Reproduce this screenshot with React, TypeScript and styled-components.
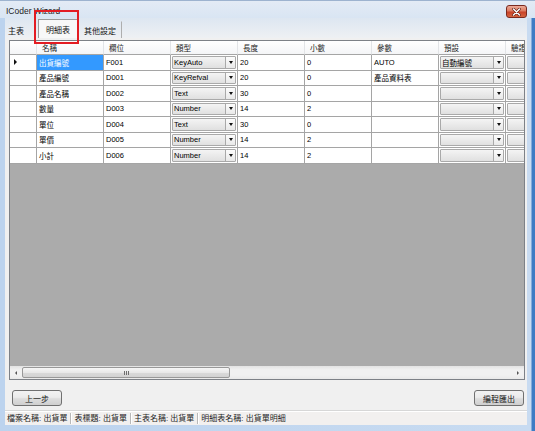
import React from 'react';
import styled, { createGlobalStyle } from 'styled-components';

const FONT = `"Liberation Sans", "Noto Sans CJK TC", sans-serif`;

const GlobalStyle = createGlobalStyle`
  * { box-sizing: border-box; }
  html, body { margin: 0; padding: 0; }
  body {
    width: 535px; height: 431px; overflow: hidden;
    background: #c3d8f1;
    font-family: ${FONT};
  }
`;

const Window = styled.div`
  position: relative;
  width: 535px;
  height: 431px;
  overflow: hidden;
  display: flex;
  flex-direction: column;
  background: linear-gradient(to right, #bcd3ee 0, #c8dbf1 527px, #c8dbf1 531px, #3f7cc4 532px, #3f7cc4 535px);
`;

const TitleBar = styled.div`
  height: 18px;
  flex: none;
  display: flex;
  align-items: flex-start;
  justify-content: space-between;
  padding: 0 8px 0 6px;
  background: linear-gradient(#e3ebf5, #d9e5f3);
  border-top: 1px solid #9db3cf;
`;

const Title = styled.span`
  font: 8.5px "Liberation Sans", sans-serif;
  color: #1e1e1e;
  margin-top: 5px;
  line-height: 10px;
`;

const CloseBtn = styled.div`
  width: 21px;
  height: 13px;
  margin-top: 4px;
  border: 1px solid #7a2a1f;
  border-radius: 3px;
  background: linear-gradient(#ecab98 0%, #dc7a60 45%, #c8432a 55%, #d5643f 100%);
  display: flex;
  align-items: center;
  justify-content: center;
`;

const Frame = styled.div`
  flex: 1;
  min-height: 0;
  display: flex;
  padding: 0 8px 0 5px;
`;

const Client = styled.div`
  flex: 1;
  min-width: 0;
  overflow: hidden;
  display: flex;
  flex-direction: column;
  background: #f0f0f0;
`;

const BottomFrame = styled.div`
  height: 6px;
  flex: none;
`;

const TabStrip = styled.div`
  height: 20px;
  flex: none;
  display: flex;
  align-items: flex-end;
  background: linear-gradient(#dde6f1, #eef0f3);
`;

const Tab = styled.div<{ $active?: boolean }>`
  height: ${p => (p.$active ? 19 : 17)}px;
  display: flex;
  align-items: center;
  padding: 0 ${p => (p.$active ? 7 : 5)}px;
  font-size: 8px;
  color: #111;
  white-space: nowrap;
  border: 1px solid ${p => (p.$active ? '#9a9a9a' : 'transparent')};
  border-bottom: none;
  border-right-color: ${p => (p.$active ? '#9a9a9a' : '#aeaeae')};
  background: ${p => (p.$active ? '#f8f8f8' : 'transparent')};
  &:first-child {
    margin-left: -2px;
    padding: 0 13px 0 4px;
    border-right-color: transparent;
  }
`;

const TabPage = styled.div`
  flex: none;
  padding: 2px 2px 0 4px;
`;

const GridBox = styled.div`
  width: 516px;
  height: 340px;
  border: 1px solid #7d8187;
  display: flex;
  flex-direction: column;
  background: #ababab;
  overflow: hidden;
`;

const Viewport = styled.div`
  flex: 1;
  min-height: 0;
  overflow: hidden;
`;

const GridRow = styled.div<{ $h: number }>`
  display: grid;
  grid-template-columns: 27px repeat(8, 67px);
  width: 563px;
  height: ${p => p.$h}px;
`;

const HeadCell = styled.div`
  display: flex;
  align-items: center;
  padding-left: 5px;
  font-size: 7.5px;
  color: #1a1a1a;
  white-space: nowrap;
  overflow: hidden;
  background: linear-gradient(#ffffff, #f4f5f7);
  border-right: 1px solid #e2e4e7;
  border-bottom: 1px solid #a5a5a5;
`;

const RowHead = styled.div<{ $current?: boolean }>`
  display: flex;
  align-items: center;
  padding-left: 4px;
  background: #ffffff;
  border-right: 1px solid #a5a5a5;
  border-bottom: 1px solid #a5a5a5;
  &::after {
    content: '';
    display: ${p => (p.$current ? 'block' : 'none')};
    border-top: 3px solid transparent;
    border-bottom: 3px solid transparent;
    border-left: 3px solid #111;
  }
`;

const Cell = styled.div<{ $sel?: boolean }>`
  display: flex;
  align-items: center;
  padding-left: 2px;
  font-size: 7.5px;
  white-space: nowrap;
  overflow: hidden;
  color: ${p => (p.$sel ? '#ffffff' : '#000000')};
  background: ${p => (p.$sel ? '#3399ff' : '#ffffff')};
  border-right: 1px solid #a5a5a5;
  border-bottom: 1px solid #a5a5a5;
`;

const ComboCell = styled(Cell)`
  padding: 1px;
  align-items: stretch;
`;

const Combo = styled.div`
  flex: 1;
  display: flex;
  border: 1px solid #a9a9a9;
  border-radius: 1px;
  background: linear-gradient(#f4f4f4, #e0e0e0);
`;

const ComboText = styled.span`
  flex: 1;
  display: flex;
  align-items: center;
  padding-left: 1px;
  font-size: 7.5px;
  overflow: hidden;
`;

const ComboArrow = styled.span`
  width: 10px;
  flex: none;
  display: flex;
  align-items: center;
  justify-content: center;
  border-left: 1px solid #a9a9a9;
  background: linear-gradient(#fcfcfc, #e9e9e9);
  &::after {
    content: '';
    border-left: 2.5px solid transparent;
    border-right: 2.5px solid transparent;
    border-top: 3px solid #111;
  }
`;

const HScroll = styled.div`
  height: 13px;
  flex: none;
  display: flex;
  align-items: center;
  background: linear-gradient(#e3e3e3, #f1f1f1 30%, #f1f1f1 70%, #e9e9e9);
`;

const ScrollArrow = styled.div<{ $dir: 'left' | 'right' }>`
  width: 12px;
  height: 100%;
  flex: none;
  display: flex;
  align-items: center;
  justify-content: center;
  &::after {
    content: '';
    border-top: 2.5px solid transparent;
    border-bottom: 2.5px solid transparent;
    ${p => (p.$dir === 'left' ? 'border-right: 2.5px solid #555;' : 'border-left: 2.5px solid #555;')}
  }
`;

const Thumb = styled.div`
  width: 208px;
  height: 11px;
  flex: none;
  display: flex;
  align-items: center;
  justify-content: center;
  border: 1px solid #989898;
  border-radius: 2px;
  background: linear-gradient(#f6f6f6, #e8e8e8 50%, #dadada 50%, #d2d2d2);
`;

const Grip = styled.span`
  width: 5px;
  height: 4px;
  background: repeating-linear-gradient(to right, #6e6e6e 0, #6e6e6e 1px, transparent 1px, transparent 2px);
`;

const ScrollSpace = styled.div`
  flex: 1;
`;

const ButtonRow = styled.div`
  height: 30px;
  flex: none;
  display: flex;
  align-items: flex-start;
  justify-content: space-between;
  padding: 10px 3px 0 7px;
`;

const Button = styled.button`
  width: 50px;
  height: 16px;
  padding: 0;
  border: 1px solid #707070;
  border-radius: 3px;
  background: linear-gradient(#f2f2f2 0%, #ebebeb 45%, #dddddd 55%, #cfcfcf 100%);
  font: 8px ${FONT};
  color: #111;
  display: flex;
  align-items: center;
  justify-content: center;
`;

const StatusBar = styled.div`
  height: 15px;
  flex: none;
  display: flex;
  align-items: center;
  padding-left: 2px;
  background: #f2f0ef;
  border-top: 1px solid #d7d7d7;
  box-shadow: inset 0 1px 0 #ffffff;
`;

const StatusItem = styled.span`
  font-size: 8px;
  color: #1e1e1e;
  padding: 0 3px 0 0;
  margin-right: 3px;
  line-height: 11px;
  white-space: nowrap;
  border-right: 1px solid #b8b8b8;
  box-shadow: 1px 0 0 #ffffff;
  &:last-child {
    border-right: none;
    box-shadow: none;
  }
`;

const Annotation = styled.div`
  position: absolute;
  left: 34px;
  top: 10px;
  width: 45px;
  height: 34px;
  border: 2px solid #e31c23;
  pointer-events: none;
`;

type Row = {
  name: string;
  field: string;
  type: string;
  len: string;
  dec: string;
  param: string;
  def: string;
};

const rows: Row[] = [
  { name: '出貨編號', field: 'F001', type: 'KeyAuto', len: '20', dec: '0', param: 'AUTO', def: '自動編號' },
  { name: '產品編號', field: 'D001', type: 'KeyRefval', len: '20', dec: '0', param: '產品資料表', def: '' },
  { name: '產品名稱', field: 'D002', type: 'Text', len: '30', dec: '0', param: '', def: '' },
  { name: '數量', field: 'D003', type: 'Number', len: '14', dec: '2', param: '', def: '' },
  { name: '單位', field: 'D004', type: 'Text', len: '30', dec: '0', param: '', def: '' },
  { name: '單價', field: 'D005', type: 'Number', len: '14', dec: '2', param: '', def: '' },
  { name: '小計', field: 'D006', type: 'Number', len: '14', dec: '2', param: '', def: '' },
];

const headers = ['名稱', '欄位', '類型', '長度', '小數', '參數', '預設', '驗證'];

const ComboBox: React.FC<{ text: string }> = ({ text }) => (
  <ComboCell>
    <Combo>
      <ComboText>{text}</ComboText>
      <ComboArrow />
    </Combo>
  </ComboCell>
);

const CloseIcon = () => (
  <svg width="9" height="8" viewBox="0 0 9 8">
    <path d="M1.5 1 L7.5 7 M7.5 1 L1.5 7" stroke="#5a1a10" strokeWidth="2.6" strokeLinecap="round" />
    <path d="M1.5 1 L7.5 7 M7.5 1 L1.5 7" stroke="#ffffff" strokeWidth="1.5" strokeLinecap="round" />
  </svg>
);

export default function App() {
  return (
    <>
      <GlobalStyle />
      <Window>
        <TitleBar>
          <Title>ICoder Wizard</Title>
          <CloseBtn>
            <CloseIcon />
          </CloseBtn>
        </TitleBar>
        <Frame>
          <Client>
            <TabStrip>
              <Tab>主表</Tab>
              <Tab $active>明細表</Tab>
              <Tab>其他設定</Tab>
            </TabStrip>
            <TabPage>
              <GridBox>
                <Viewport>
                  <GridRow $h={14}>
                    <HeadCell />
                    {headers.map(h => (
                      <HeadCell key={h}>{h}</HeadCell>
                    ))}
                  </GridRow>
                  {rows.map((r, i) => (
                    <GridRow $h={15.5} key={r.field}>
                      <RowHead $current={i === 0} />
                      <Cell $sel={i === 0}>{r.name}</Cell>
                      <Cell>{r.field}</Cell>
                      <ComboBox text={r.type} />
                      <Cell>{r.len}</Cell>
                      <Cell>{r.dec}</Cell>
                      <Cell>{r.param}</Cell>
                      <ComboBox text={r.def} />
                      <ComboBox text="" />
                    </GridRow>
                  ))}
                </Viewport>
                <HScroll>
                  <ScrollArrow $dir="left" />
                  <Thumb>
                    <Grip />
                  </Thumb>
                  <ScrollSpace />
                  <ScrollArrow $dir="right" />
                </HScroll>
              </GridBox>
            </TabPage>
            <ButtonRow>
              <Button>上一步</Button>
              <Button>編程匯出</Button>
            </ButtonRow>
            <StatusBar>
              <StatusItem>檔案名稱: 出貨單</StatusItem>
              <StatusItem>表標題: 出貨單</StatusItem>
              <StatusItem>主表名稱: 出貨單</StatusItem>
              <StatusItem>明細表名稱: 出貨單明細</StatusItem>
            </StatusBar>
          </Client>
        </Frame>
        <BottomFrame />
        <Annotation />
      </Window>
    </>
  );
}
